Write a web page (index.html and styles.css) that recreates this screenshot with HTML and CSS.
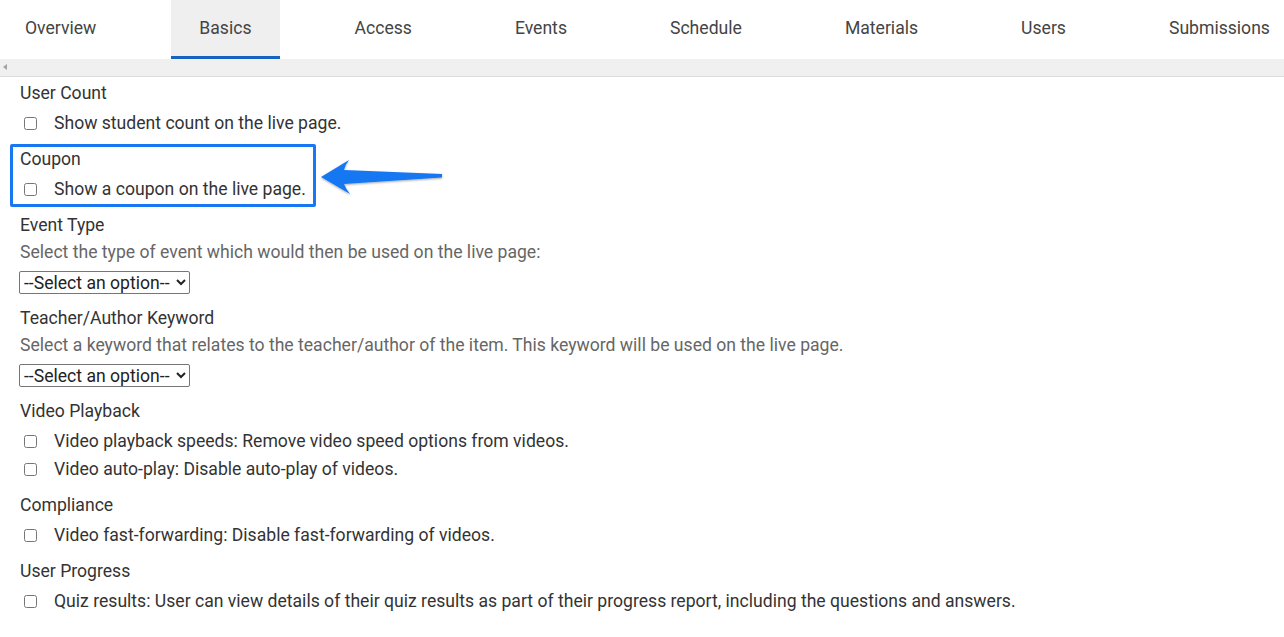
FILE: index.html
```html
<!DOCTYPE html>
<html lang="en">

<head>
    <meta charset="UTF-8" />
    <meta name="viewport" content="width=device-width, initial-scale=1.0" />
    <title>Basics</title>
    <link rel="stylesheet" href="styles.css">
</head>

<body>
    <div class="tabs">
        <div class="tab">Overview</div>
        <div class="tab tab-active">Basics</div>
        <div class="tab">Access</div>
        <div class="tab">Events</div>
        <div class="tab">Schedule</div>
        <div class="tab">Materials</div>
        <div class="tab">Users</div>
        <div class="tab">Submissions</div>
    </div>
    <div class="scrollbar">
        <span class="scroll-left"></span>
    </div>

    <div class="content">
        <div class="section">
            <div class="label">User Count</div>
            <label class="check-row"><input type="checkbox"> Show student count on the live page.</label>
        </div>

        <div class="section highlight">
            <div class="label">Coupon</div>
            <label class="check-row"><input type="checkbox"> Show a coupon on the live page.</label>
            <svg class="pointer" viewBox="0 0 128 42" width="128" height="42">
                <defs>
                    <filter id="shade" x="-10%" y="-20%" width="120%" height="150%">
                        <feDropShadow dx="0" dy="1" stdDeviation="1" flood-color="#000" flood-opacity="0.35" />
                    </filter>
                </defs>
                <path d="M3 21 L31 4 Q27 9 26 14 L124 18 L124 21.5 L26 28 Q28 33 32 38 Z" fill="#1877f2" filter="url(#shade)" />
            </svg>
        </div>

        <div class="section">
            <div class="label">Event Type</div>
            <div class="desc">Select the type of event which would then be used on the live page:</div>
            <select class="picker">
                <option>--Select an option--</option>
            </select>
        </div>

        <div class="section">
            <div class="label">Teacher/Author Keyword</div>
            <div class="desc">Select a keyword that relates to the teacher/author of the item. This keyword will be used on the live page.</div>
            <select class="picker">
                <option>--Select an option--</option>
            </select>
        </div>

        <div class="section">
            <div class="label">Video Playback</div>
            <label class="check-row"><input type="checkbox"> Video playback speeds: Remove video speed options from videos.</label>
            <label class="check-row"><input type="checkbox"> Video auto-play: Disable auto-play of videos.</label>
        </div>

        <div class="section">
            <div class="label">Compliance</div>
            <label class="check-row"><input type="checkbox"> Video fast-forwarding: Disable fast-forwarding of videos.</label>
        </div>

        <div class="section">
            <div class="label">User Progress</div>
            <label class="check-row"><input type="checkbox"> Quiz results: User can view details of their quiz results as part of their progress report, including the questions and answers.</label>
        </div>
    </div>
</body>

</html>
```

FILE: styles.css
```css
body {
    margin: 0;
    font-family: Roboto, "Liberation Sans", sans-serif;
    font-size: 17.6px;
    color: #333;
    background-color: #fff;
    overflow: hidden;
}

.tabs {
    display: flex;
    gap: 47px;
    height: 59px;
    white-space: nowrap;
    margin-left: -3px;
}

.tab {
    display: flex;
    align-items: center;
    padding: 0 28px 3px 28px;
    font-size: 17.6px;
    color: #444;
    box-sizing: border-box;
    height: 59px;
}

.tab-active {
    background-color: #efefef;
    border-bottom: 3px solid #1565c0;
    padding-bottom: 0;
}

.scrollbar {
    height: 17px;
    background-color: #f0f0f0;
    border-bottom: 1px solid #dcdcdc;
    position: relative;
}

.scroll-left {
    position: absolute;
    left: 3px;
    top: 5px;
    width: 0;
    height: 0;
    border-top: 3px solid transparent;
    border-bottom: 3px solid transparent;
    border-right: 4px solid #a3a3a3;
}

.content {
    padding: 4px 0 0 20px;
}

.section {
    margin-bottom: 12px;
    position: relative;
}

.label {
    line-height: 24px;
    color: #333;
    margin-bottom: 6px;
}

.desc {
    line-height: 24px;
    color: #666;
    margin-top: -3px;
    margin-bottom: 7px;
}

.check-row {
    display: flex;
    align-items: center;
    line-height: 24px;
    color: #333;
    margin-bottom: 4px;
}

.check-row:last-of-type {
    margin-bottom: 1px;
}

.check-row input {
    width: 13px;
    height: 13px;
    margin: 0 17px 0 4px;
}

.picker {
    display: block;
    font-family: Roboto, "Liberation Sans", sans-serif;
    font-size: 17.6px;
    height: 23px;
    padding: 0 3px 0 0;
    color: #222;
    border: 1px solid #767676;
    border-radius: 2px;
    background-color: #fff;
    margin: 0 0 1px -1px;
}

.highlight::before {
    content: "";
    position: absolute;
    left: -10px;
    top: -3px;
    width: 306px;
    height: 63px;
    box-sizing: border-box;
    border: 3px solid #1877f2;
    border-radius: 2px;
}

.pointer {
    position: absolute;
    left: 298px;
    top: 9px;
}
```
